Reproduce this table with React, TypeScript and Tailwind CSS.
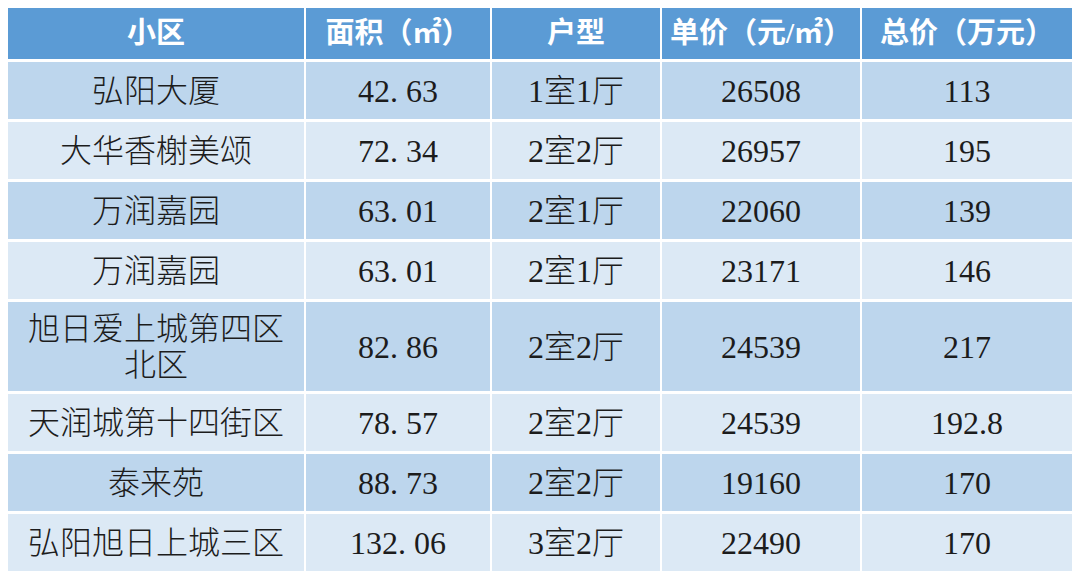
import React from "react"

type Row = {
  name: React.ReactNode
  area: string
  layout: string
  unit: string
  total: string
  tall?: boolean
}

const headers = ["小区", "面积（㎡）", "户型", "单价（元/㎡）", "总价（万元）"]

const rows: Row[] = [
  { name: "弘阳大厦", area: "42.63", layout: "1室1厅", unit: "26508", total: "113" },
  { name: "大华香榭美颂", area: "72.34", layout: "2室2厅", unit: "26957", total: "195" },
  { name: "万润嘉园", area: "63.01", layout: "2室1厅", unit: "22060", total: "139" },
  { name: "万润嘉园", area: "63.01", layout: "2室1厅", unit: "23171", total: "146" },
  {
    name: (
      <>
        旭日爱上城第四区
        <br />
        北区
      </>
    ),
    area: "82.86",
    layout: "2室2厅",
    unit: "24539",
    total: "217",
    tall: true,
  },
  { name: "天润城第十四街区", area: "78.57", layout: "2室2厅", unit: "24539", total: "192.8" },
  { name: "泰来苑", area: "88.73", layout: "2室2厅", unit: "19160", total: "170" },
  { name: "弘阳旭日上城三区", area: "132.06", layout: "3室2厅", unit: "22490", total: "170" },
]

const font = { fontFamily: '"Liberation Serif", "Noto Sans CJK SC", serif' }

// the area column uses a wide half-width period, like the original table font
function Area({ value }: { value: string }) {
  const [a, b] = value.split(".")
  return (
    <span>
      {a}
      <span className="mr-[8px]">.</span>
      {b}
    </span>
  )
}

export default function App() {
  return (
    <div className="w-[1080px] h-[578px] bg-white pt-[8px] pl-[8px] overflow-hidden" style={font}>
      <div className="grid grid-cols-[296px_184px_168px_198px_210px] gap-x-[2px] gap-y-[3px] w-[1064px]">
        {headers.map((h) => (
          <div
            key={h}
            className="h-[51px] bg-[#5b9bd5] text-white text-[29px] font-bold flex items-center justify-center leading-none"
          >
            {h}
          </div>
        ))}
        {rows.map((r, i) => {
          const bg = i % 2 === 0 ? "bg-[#bdd6ed]" : "bg-[#dce9f5]"
          const h = r.tall ? "h-[89px]" : "h-[57px]"
          const cells: React.ReactNode[] = [r.name, <Area value={r.area} />, r.layout, r.unit, r.total]
          return cells.map((c, j) => (
            <div
              key={`${i}-${j}`}
              className={`${bg} ${h} flex items-center justify-center text-center text-[32px] font-light leading-[36px] text-[#1c1c1c]`}
            >
              <span>{c}</span>
            </div>
          ))
        })}
      </div>
    </div>
  )
}
